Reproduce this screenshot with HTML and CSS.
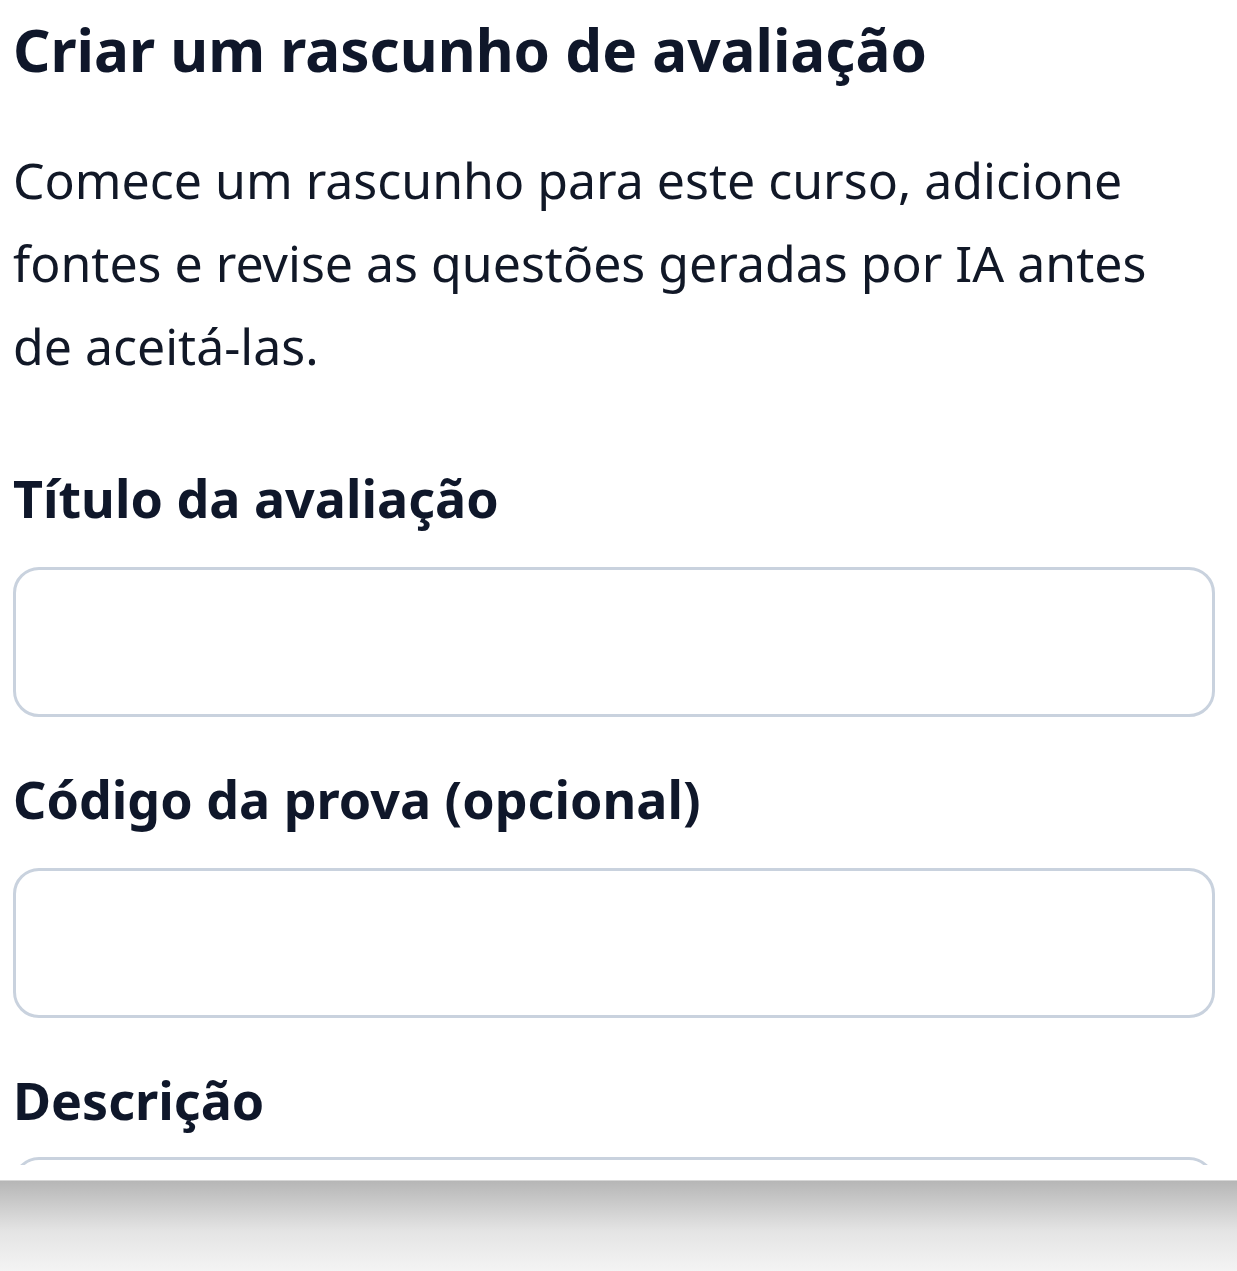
FILE: index.html
```html
<!DOCTYPE html>
<html lang="pt-BR">
<head>
    <meta charset="UTF-8">
    <meta name="viewport" content="width=device-width, initial-scale=1.0">
    <title>Criar um rascunho de avaliação</title>
    <link rel="stylesheet" href="styles.css">
</head>
<body>
    <div class="sheet">
        <div class="sheet-body">
            <h1 class="title">Criar um rascunho de avaliação</h1>
            <p class="lead">Comece um rascunho para este curso, adicione fontes e revise as questões geradas por IA antes de aceitá-las.</p>

            <form class="form">
                <div class="field">
                    <label class="label" for="titulo">Título da avaliação</label>
                    <input class="input" id="titulo" type="text">
                </div>
                <div class="field">
                    <label class="label" for="codigo">Código da prova (opcional)</label>
                    <input class="input" id="codigo" type="text">
                </div>
                <div class="field field-last">
                    <label class="label" for="descricao">Descrição</label>
                    <textarea class="input textarea" id="descricao"></textarea>
                </div>
            </form>
        </div>
    </div>
    <div class="shade"></div>
</body>
</html>
```

FILE: styles.css
```css
body {
    margin: 0;
    background: #fff;
    font-family: "Noto Sans", "Open Sans", Arial, sans-serif;
    color: #0f172a;
}

.sheet {
    height: 1180px;
    background: #fff;
    overflow: hidden;
}

.sheet-body {
    height: 1165px;
    overflow: hidden;
    padding: 0 22px 0 13px;
}

.title {
    margin: 0;
    padding-top: 8px;
    font-size: 58.4px;
    font-weight: 700;
    line-height: 84px;
}

.lead {
    max-width: 1160px;
    margin: 47px 0 0 0;
    font-size: 50px;
    line-height: 83px;
    color: #111827;
}

.form {
    display: flex;
    flex-direction: column;
    margin-top: 75px;
}

.field {
    display: flex;
    flex-direction: column;
    gap: 34px;
    margin-bottom: 47px;
}

.field-last {
    gap: 22px;
}

.label {
    font-size: 52px;
    font-weight: 700;
    line-height: 70px;
}

.input {
    box-sizing: border-box;
    width: 100%;
    height: 150px;
    border: 3px solid #c9d2de;
    border-radius: 26px;
    background: #fff;
    font: inherit;
    font-size: 44px;
    padding: 0 36px;
    outline: none;
}

.textarea {
    height: 300px;
    resize: none;
    padding-top: 30px;
}

.shade {
    height: 91px;
    border-top: 1px solid #d6d6d6;
    background: linear-gradient(#b6b6b6, #e4e4e4 55%, #f4f4f4);
}
```
